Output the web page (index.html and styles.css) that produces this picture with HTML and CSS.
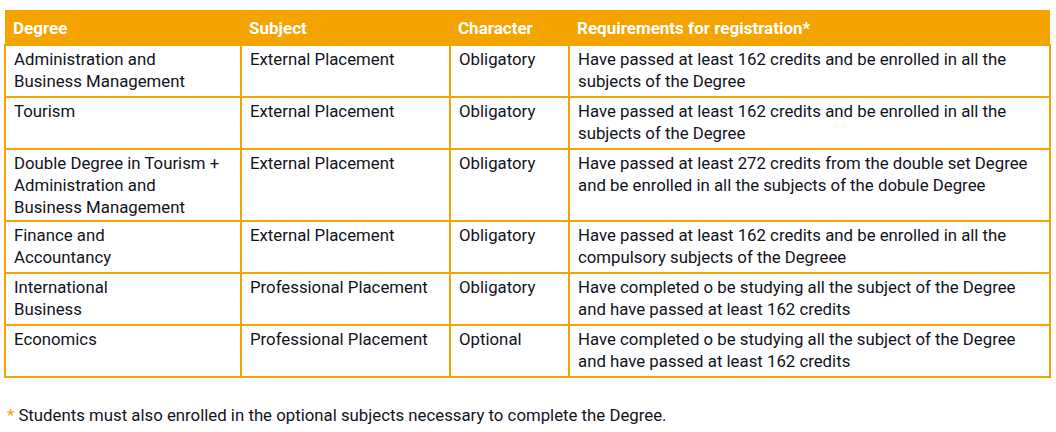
FILE: index.html
```html
<!DOCTYPE html>
<html>
<head>
<meta charset="utf-8">
<link rel="stylesheet" href="styles.css">
</head>
<body>
<div class="page">
<table class="reg">
  <colgroup>
    <col class="c1"><col class="c2"><col class="c3"><col class="c4">
  </colgroup>
  <thead>
    <tr><th>Degree</th><th>Subject</th><th>Character</th><th>Requirements for registration*</th></tr>
  </thead>
  <tbody>
    <tr class="r2"><td>Administration and<br>Business Management</td><td>External Placement</td><td>Obligatory</td><td>Have passed at least 162 credits and be enrolled in all the<br>subjects of the Degree</td></tr>
    <tr class="r2"><td>Tourism</td><td>External Placement</td><td>Obligatory</td><td>Have passed at least 162 credits and be enrolled in all the<br>subjects of the Degree</td></tr>
    <tr class="r3"><td>Double Degree in Tourism +<br>Administration and<br>Business Management</td><td>External Placement</td><td>Obligatory</td><td>Have passed at least 272 credits from the double set Degree<br>and be enrolled in all the subjects of the dobule Degree</td></tr>
    <tr class="r2"><td>Finance and<br>Accountancy</td><td>External Placement</td><td>Obligatory</td><td>Have passed at least 162 credits and be enrolled in all the<br>compulsory subjects of the Degreee</td></tr>
    <tr class="r2"><td>International<br>Business</td><td>Professional Placement</td><td>Obligatory</td><td>Have completed o be studying all the subject of the Degree<br>and have passed at least 162 credits</td></tr>
    <tr class="r2"><td>Economics</td><td>Professional Placement</td><td>Optional</td><td>Have completed o be studying all the subject of the Degree<br>and have passed at least 162 credits</td></tr>
  </tbody>
</table>
<p class="note"><span class="star">*</span> Students must also enrolled in the optional subjects necessary to complete the Degree.</p>
</div>
</body>
</html>
```
FILE: styles.css
```css
* { box-sizing: border-box; }
html, body { margin: 0; padding: 0; background: #fff; }
body {
  font-family: Roboto, "Liberation Sans", sans-serif;
  font-size: 16.8px;
  color: #12121c;
}
.page { padding: 10px 7px 0 4px; }
.reg {
  border-collapse: collapse;
  table-layout: fixed;
  width: 1045px;
}
.c1 { width: 236px; }
.c2 { width: 209px; }
.c3 { width: 119px; }
.c4 { width: 481px; }
.reg th {
  background: #f5a300;
  color: #fff;
  font-weight: bold;
  font-size: 17px;
  text-align: left;
  height: 35px;
  padding: 2px 8px 0;
  vertical-align: middle;
  border: none;
}
.reg td {
  border: 2px solid #f5a300;
  vertical-align: top;
  padding: 2px 6px 2px 8px;
  line-height: 22px;
}
.r2 td { height: 52px; }
.r3 td { height: 72px; }
.note {
  margin: 26px 0 0 3px;
  line-height: 22px;
}
.star { color: #f5a300; }
```
